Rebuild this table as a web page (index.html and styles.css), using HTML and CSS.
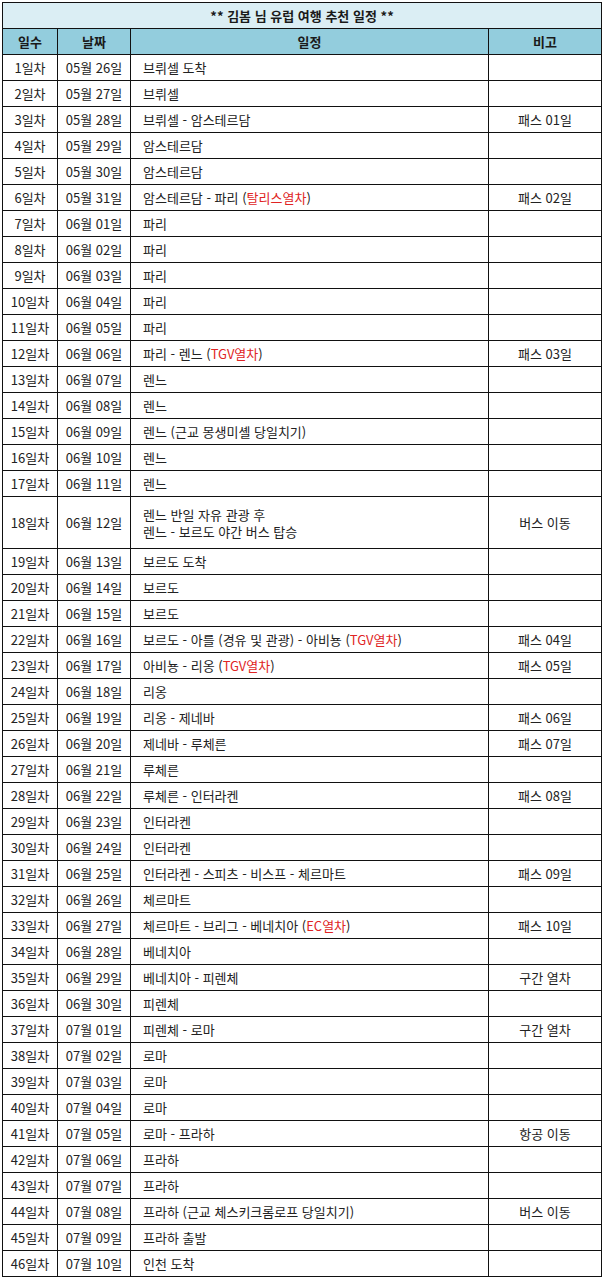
FILE: index.html
```html
<!DOCTYPE html>
<html lang="ko">
<head>
<meta charset="utf-8">
<title>김봄 님 유럽 여행 추천 일정</title>
<link rel="stylesheet" href="styles.css">
</head>
<body>
<table class="plan">
<colgroup><col class="c1"><col class="c2"><col class="c3"><col class="c4"></colgroup>
<thead>
<tr class="title"><th colspan="4">** 김봄 님 유럽 여행 추천 일정 **</th></tr>
<tr class="head"><th>일수</th><th>날짜</th><th>일정</th><th>비고</th></tr>
</thead>
<tbody>
<tr><td>1일차</td><td>05월 26일</td><td class="plan-t">브뤼셀 도착</td><td></td></tr>
<tr><td>2일차</td><td>05월 27일</td><td class="plan-t">브뤼셀</td><td></td></tr>
<tr><td>3일차</td><td>05월 28일</td><td class="plan-t">브뤼셀 - 암스테르담</td><td>패스 01일</td></tr>
<tr><td>4일차</td><td>05월 29일</td><td class="plan-t">암스테르담</td><td></td></tr>
<tr><td>5일차</td><td>05월 30일</td><td class="plan-t">암스테르담</td><td></td></tr>
<tr><td>6일차</td><td>05월 31일</td><td class="plan-t">암스테르담 - 파리 (<span class="red">탈리스열차</span>)</td><td>패스 02일</td></tr>
<tr><td>7일차</td><td>06월 01일</td><td class="plan-t">파리</td><td></td></tr>
<tr><td>8일차</td><td>06월 02일</td><td class="plan-t">파리</td><td></td></tr>
<tr><td>9일차</td><td>06월 03일</td><td class="plan-t">파리</td><td></td></tr>
<tr><td>10일차</td><td>06월 04일</td><td class="plan-t">파리</td><td></td></tr>
<tr><td>11일차</td><td>06월 05일</td><td class="plan-t">파리</td><td></td></tr>
<tr><td>12일차</td><td>06월 06일</td><td class="plan-t">파리 - 렌느 (<span class="red">TGV열차</span>)</td><td>패스 03일</td></tr>
<tr><td>13일차</td><td>06월 07일</td><td class="plan-t">렌느</td><td></td></tr>
<tr><td>14일차</td><td>06월 08일</td><td class="plan-t">렌느</td><td></td></tr>
<tr><td>15일차</td><td>06월 09일</td><td class="plan-t">렌느 (근교 몽생미셸 당일치기)</td><td></td></tr>
<tr><td>16일차</td><td>06월 10일</td><td class="plan-t">렌느</td><td></td></tr>
<tr><td>17일차</td><td>06월 11일</td><td class="plan-t">렌느</td><td></td></tr>
<tr class="tall"><td>18일차</td><td>06월 12일</td><td class="plan-t">렌느 반일 자유 관광 후<br>렌느 - 보르도 야간 버스 탑승</td><td>버스 이동</td></tr>
<tr><td>19일차</td><td>06월 13일</td><td class="plan-t">보르도 도착</td><td></td></tr>
<tr><td>20일차</td><td>06월 14일</td><td class="plan-t">보르도</td><td></td></tr>
<tr><td>21일차</td><td>06월 15일</td><td class="plan-t">보르도</td><td></td></tr>
<tr><td>22일차</td><td>06월 16일</td><td class="plan-t">보르도 - 아를 (경유 및 관광) - 아비뇽 (<span class="red">TGV열차</span>)</td><td>패스 04일</td></tr>
<tr><td>23일차</td><td>06월 17일</td><td class="plan-t">아비뇽 - 리옹 (<span class="red">TGV열차</span>)</td><td>패스 05일</td></tr>
<tr><td>24일차</td><td>06월 18일</td><td class="plan-t">리옹</td><td></td></tr>
<tr><td>25일차</td><td>06월 19일</td><td class="plan-t">리옹 - 제네바</td><td>패스 06일</td></tr>
<tr><td>26일차</td><td>06월 20일</td><td class="plan-t">제네바 - 루체른</td><td>패스 07일</td></tr>
<tr><td>27일차</td><td>06월 21일</td><td class="plan-t">루체른</td><td></td></tr>
<tr><td>28일차</td><td>06월 22일</td><td class="plan-t">루체른 - 인터라켄</td><td>패스 08일</td></tr>
<tr><td>29일차</td><td>06월 23일</td><td class="plan-t">인터라켄</td><td></td></tr>
<tr><td>30일차</td><td>06월 24일</td><td class="plan-t">인터라켄</td><td></td></tr>
<tr><td>31일차</td><td>06월 25일</td><td class="plan-t">인터라켄 - 스피츠 - 비스프 - 체르마트</td><td>패스 09일</td></tr>
<tr><td>32일차</td><td>06월 26일</td><td class="plan-t">체르마트</td><td></td></tr>
<tr><td>33일차</td><td>06월 27일</td><td class="plan-t">체르마트 - 브리그 - 베네치아 (<span class="red">EC열차</span>)</td><td>패스 10일</td></tr>
<tr><td>34일차</td><td>06월 28일</td><td class="plan-t">베네치아</td><td></td></tr>
<tr><td>35일차</td><td>06월 29일</td><td class="plan-t">베네치아 - 피렌체</td><td>구간 열차</td></tr>
<tr><td>36일차</td><td>06월 30일</td><td class="plan-t">피렌체</td><td></td></tr>
<tr><td>37일차</td><td>07월 01일</td><td class="plan-t">피렌체 - 로마</td><td>구간 열차</td></tr>
<tr><td>38일차</td><td>07월 02일</td><td class="plan-t">로마</td><td></td></tr>
<tr><td>39일차</td><td>07월 03일</td><td class="plan-t">로마</td><td></td></tr>
<tr><td>40일차</td><td>07월 04일</td><td class="plan-t">로마</td><td></td></tr>
<tr><td>41일차</td><td>07월 05일</td><td class="plan-t">로마 - 프라하</td><td>항공 이동</td></tr>
<tr><td>42일차</td><td>07월 06일</td><td class="plan-t">프라하</td><td></td></tr>
<tr><td>43일차</td><td>07월 07일</td><td class="plan-t">프라하</td><td></td></tr>
<tr><td>44일차</td><td>07월 08일</td><td class="plan-t">프라하 (근교 체스키크롬로프 당일치기)</td><td>버스 이동</td></tr>
<tr><td>45일차</td><td>07월 09일</td><td class="plan-t">프라하 출발</td><td></td></tr>
<tr><td>46일차</td><td>07월 10일</td><td class="plan-t">인천 도착</td><td></td></tr>
</tbody>
</table>
</body>
</html>
```
FILE: styles.css
```css
html, body {
  margin: 0;
  padding: 0;
  background: #ffffff;
}
body {
  padding: 2px;
  font-family: "Noto Sans CJK KR", "Noto Sans", sans-serif;
  font-size: 13px;
  color: #222222;
}
.plan {
  border-collapse: collapse;
  table-layout: fixed;
  width: 599px;
}
.c1 { width: 55px; }
.c2 { width: 73px; }
.c3 { width: 358px; }
.c4 { width: 113px; }
.plan th, .plan td {
  border: 1px solid #111111;
  padding: 0;
  height: 25px;
  line-height: 17px;
  text-align: center;
  vertical-align: middle;
  white-space: nowrap;
  overflow: hidden;
}
.title th {
  background: #dbeef4;
  font-weight: bold;
  color: #1a1a1a;
}
.head th {
  background: #93cddd;
  font-weight: bold;
  color: #1a1a1a;
}
.plan td.plan-t {
  text-align: left;
  padding-left: 12px;
}
.tall td {
  height: 51px;
}
.red {
  color: #e02424;
}
```
